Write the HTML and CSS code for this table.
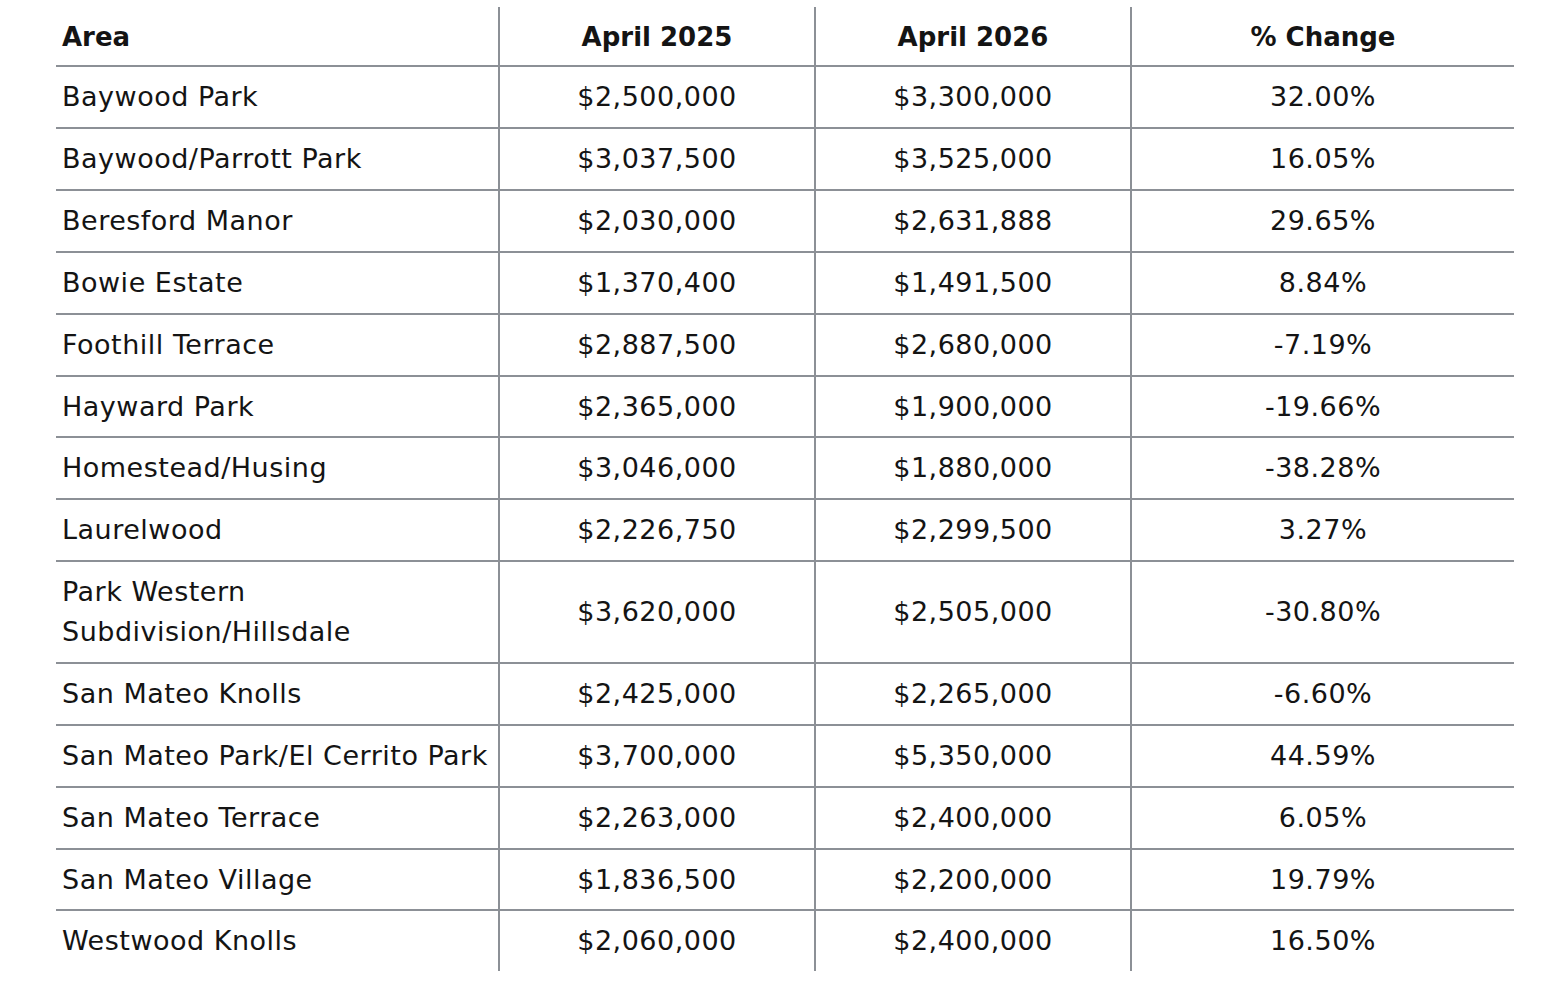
FILE: index.html
```html
<!DOCTYPE html>
<html>
<head>
<meta charset="utf-8">
<link rel="stylesheet" href="styles.css">
</head>
<body>
<div class="wrap">
<table class="prices">
<colgroup><col class="c1"><col class="c2"><col class="c3"><col class="c4"></colgroup>
<thead>
<tr><th class="area">Area</th><th>April 2025</th><th>April 2026</th><th>% Change</th></tr>
</thead>
<tbody>
<tr><td class="area">Baywood Park</td><td>$2,500,000</td><td>$3,300,000</td><td>32.00%</td></tr>
<tr><td class="area">Baywood/Parrott Park</td><td>$3,037,500</td><td>$3,525,000</td><td>16.05%</td></tr>
<tr><td class="area">Beresford Manor</td><td>$2,030,000</td><td>$2,631,888</td><td>29.65%</td></tr>
<tr><td class="area">Bowie Estate</td><td>$1,370,400</td><td>$1,491,500</td><td>8.84%</td></tr>
<tr><td class="area">Foothill Terrace</td><td>$2,887,500</td><td>$2,680,000</td><td>-7.19%</td></tr>
<tr><td class="area">Hayward Park</td><td>$2,365,000</td><td>$1,900,000</td><td>-19.66%</td></tr>
<tr><td class="area">Homestead/Husing</td><td>$3,046,000</td><td>$1,880,000</td><td>-38.28%</td></tr>
<tr><td class="area">Laurelwood</td><td>$2,226,750</td><td>$2,299,500</td><td>3.27%</td></tr>
<tr><td class="area">Park Western<br>Subdivision/Hillsdale</td><td>$3,620,000</td><td>$2,505,000</td><td>-30.80%</td></tr>
<tr><td class="area">San Mateo Knolls</td><td>$2,425,000</td><td>$2,265,000</td><td>-6.60%</td></tr>
<tr><td class="area">San Mateo Park/El Cerrito Park</td><td>$3,700,000</td><td>$5,350,000</td><td>44.59%</td></tr>
<tr><td class="area">San Mateo Terrace</td><td>$2,263,000</td><td>$2,400,000</td><td>6.05%</td></tr>
<tr><td class="area">San Mateo Village</td><td>$1,836,500</td><td>$2,200,000</td><td>19.79%</td></tr>
<tr><td class="area">Westwood Knolls</td><td>$2,060,000</td><td>$2,400,000</td><td>16.50%</td></tr>
</tbody>
</table>
</div>
</body>
</html>
```
FILE: styles.css
```css
html, body { margin: 0; padding: 0; background: #ffffff; }
.wrap { padding: 7px 0 0 56px; }
.prices {
  border-collapse: collapse;
  table-layout: fixed;
  width: 1458px;
  font-family: "DejaVu Sans", "Noto Sans", "Liberation Sans", sans-serif;
  font-size: 27px;
  letter-spacing: 0.5px;
  color: #141414;
}
.c1 { width: 443px; }
.c2 { width: 316px; }
.c3 { width: 316px; }
.c4 { width: 383px; }
.prices th, .prices td {
  padding: 10px 6px 9.85px;
  line-height: 40px;
  text-align: center;
  vertical-align: middle;
  border: 2px solid #8c9096;
}
.prices th {
  font-size: 26px;
  letter-spacing: 0;
  font-weight: 700;
  border-top: none;
  padding-top: 10px;
  padding-bottom: 8.4px;
}
.prices tbody tr:last-child td { border-bottom: none; }
.prices tr > :first-child { border-left: none; }
.prices tr > :last-child { border-right: none; }
.prices .area { text-align: left; }
```
